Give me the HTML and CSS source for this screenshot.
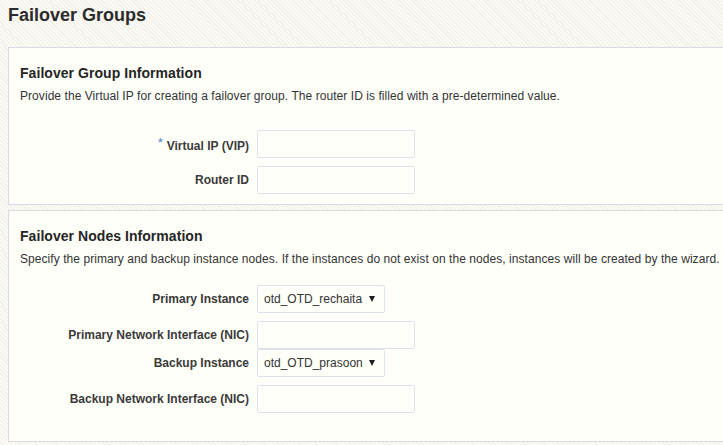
FILE: index.html
```html
<!DOCTYPE html>
<html lang="en">

<head>
    <meta charset="UTF-8">
    <title>Failover Groups</title>
    <link rel="stylesheet" href="styles.css">
</head>

<body>
    <h1 class="page-title">Failover Groups</h1>

    <div class="panel panel-group">
        <h2 class="panel-title">Failover Group Information</h2>
        <p class="panel-desc">Provide the Virtual IP for creating a failover group. The router ID is filled with a pre-determined value.</p>

        <div class="form form-group">
            <div class="form-row">
                <label class="field-label" for="vip"><span class="required">*</span>Virtual IP (VIP)</label>
                <input class="field-input" type="text" id="vip">
            </div>
            <div class="form-row gap">
                <label class="field-label" for="routerId">Router ID</label>
                <input class="field-input" type="text" id="routerId">
            </div>
        </div>
    </div>

    <div class="panel panel-nodes">
        <h2 class="panel-title">Failover Nodes Information</h2>
        <p class="panel-desc">Specify the primary and backup instance nodes. If the instances do not exist on the nodes, instances will be created by the wizard.</p>

        <div class="form form-nodes">
            <div class="form-row">
                <span class="field-label">Primary Instance</span>
                <div class="field-select">
                    <span class="select-value">otd_OTD_rechaita</span>
                    <span class="select-arrow"></span>
                </div>
            </div>
            <div class="form-row gap">
                <label class="field-label" for="primaryNic">Primary Network Interface (NIC)</label>
                <input class="field-input" type="text" id="primaryNic">
            </div>
            <div class="form-row">
                <span class="field-label">Backup Instance</span>
                <div class="field-select">
                    <span class="select-value">otd_OTD_prasoon</span>
                    <span class="select-arrow"></span>
                </div>
            </div>
            <div class="form-row gap">
                <label class="field-label" for="backupNic">Backup Network Interface (NIC)</label>
                <input class="field-input" type="text" id="backupNic">
            </div>
        </div>
    </div>
</body>

</html>
```

FILE: styles.css
```css
html {
    overflow: hidden;
}

body {
    font-family: 'Liberation Sans', Arial, sans-serif;
    margin: 0;
    padding: 0 0 0 8px;
    min-height: 445px;
    color: #333;
    background-color: #fbfaf5;
    background-image: repeating-linear-gradient(45deg, #fbfaf5 0, #fbfaf5 2px, #f1f0e8 2px, #f1f0e8 3px);
}

.page-title {
    font-size: 18px;
    line-height: 22px;
    font-weight: bold;
    color: #2b2b2b;
    margin: 4px 0 21px;
}

.panel {
    background: #fffffa;
    border: 1px solid #d8dbe0;
    border-right: 0;
    padding: 17px 0 10px 11px;
}

.panel-nodes {
    margin-top: 5px;
    padding-bottom: 28px;
}

.panel-title {
    font-size: 14px;
    line-height: 17px;
    font-weight: bold;
    color: #252525;
    margin: 0 0 7px;
    letter-spacing: 0.05px;
}

.panel-desc {
    font-size: 12px;
    line-height: 15px;
    margin: 0;
    color: #333;
    letter-spacing: 0.06px;
    white-space: nowrap;
}

.form-group {
    margin-top: 26px;
}

.form-nodes {
    margin-top: 18px;
}

.form-row {
    display: flex;
    align-items: center;
    gap: 8px;
}

.form-row.gap {
    margin-top: 8px;
}

.field-label {
    width: 229px;
    text-align: right;
    font-size: 12px;
    font-weight: bold;
    color: #3a3a3a;
}

.required {
    color: #4a80d4;
    font-weight: normal;
    font-size: 13px;
    vertical-align: 3px;
    margin-right: 4px;
}

.field-input {
    width: 158px;
    height: 28px;
    box-sizing: border-box;
    border: 1px solid #dce2e9;
    border-radius: 2px;
    background: #fffffa;
    margin: 0;
    padding: 0 6px;
    font-family: inherit;
    font-size: 12px;
}

.field-select {
    width: 128px;
    height: 28px;
    box-sizing: border-box;
    border: 1px solid #dce2e9;
    border-radius: 2px;
    background: #fffffa;
    display: flex;
    align-items: center;
    justify-content: space-between;
    padding: 0 9px 0 6px;
    font-size: 12px;
    color: #333;
}

.select-arrow {
    width: 0;
    height: 0;
    border-left: 3px solid transparent;
    border-right: 3px solid transparent;
    border-top: 6px solid #1e1e1e;
}
```
